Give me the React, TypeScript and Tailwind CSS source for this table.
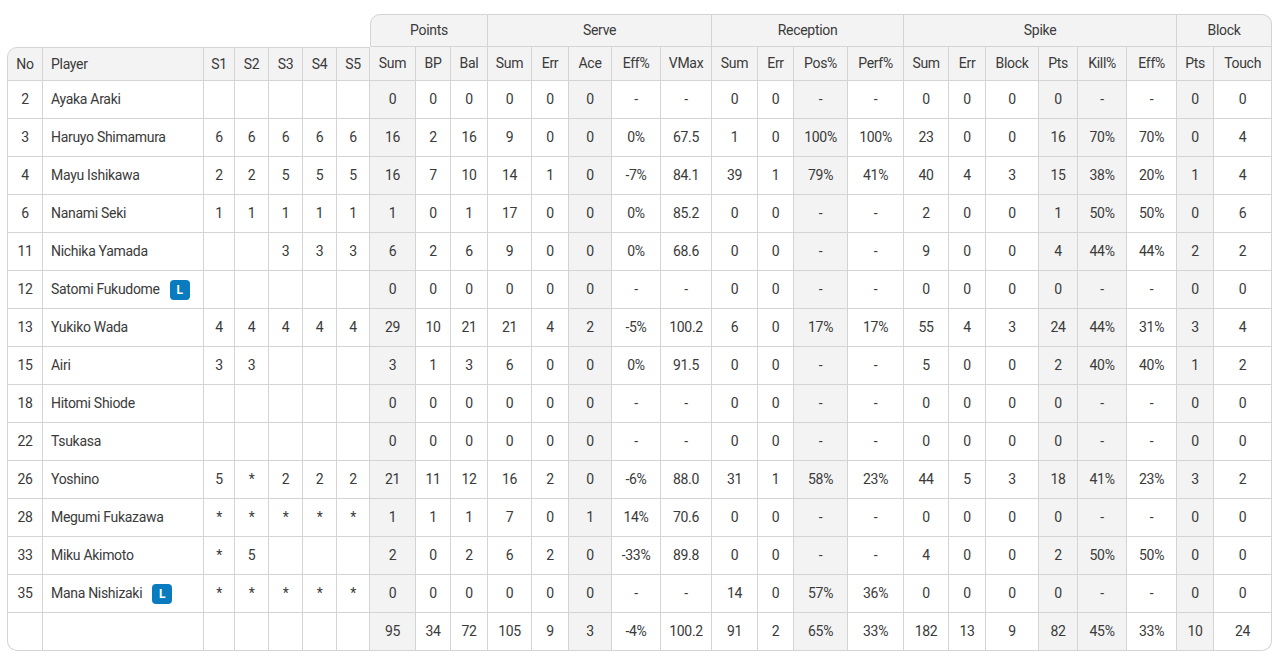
import React from 'react';

type Row = {
  no: string;
  name: string;
  libero?: boolean;
  sets: string[];
  stats: string[];
};

const groups = [
  { label: 'Points', span: 3 },
  { label: 'Serve', span: 5 },
  { label: 'Reception', span: 4 },
  { label: 'Spike', span: 6 },
  { label: 'Block', span: 2 },
];

const statHeaders = [
  'Sum', 'BP', 'Bal',
  'Sum', 'Err', 'Ace', 'Eff%', 'VMax',
  'Sum', 'Err', 'Pos%', 'Perf%',
  'Sum', 'Err', 'Block', 'Pts', 'Kill%', 'Eff%',
  'Pts', 'Touch',
];

// column widths in px, left to right
const widths = [
  36, 161, 31, 34, 34, 34, 33,
  46, 35, 37,
  44, 37, 43, 49, 51,
  46, 36, 54, 56,
  45, 37, 53, 39, 49, 50,
  37, 58,
];

// stat columns (0-based inside stats) with a grey fill
const shaded = new Set([0, 5, 10, 15, 16, 18]);

const empty = ['0', '0', '0', '0', '0', '0', '-', '-', '0', '0', '-', '-', '0', '0', '0', '0', '-', '-', '0', '0'];

const rows: Row[] = [
  { no: '2', name: 'Ayaka Araki', sets: ['', '', '', '', ''], stats: empty },
  { no: '3', name: 'Haruyo Shimamura', sets: ['6', '6', '6', '6', '6'], stats: ['16', '2', '16', '9', '0', '0', '0%', '67.5', '1', '0', '100%', '100%', '23', '0', '0', '16', '70%', '70%', '0', '4'] },
  { no: '4', name: 'Mayu Ishikawa', sets: ['2', '2', '5', '5', '5'], stats: ['16', '7', '10', '14', '1', '0', '-7%', '84.1', '39', '1', '79%', '41%', '40', '4', '3', '15', '38%', '20%', '1', '4'] },
  { no: '6', name: 'Nanami Seki', sets: ['1', '1', '1', '1', '1'], stats: ['1', '0', '1', '17', '0', '0', '0%', '85.2', '0', '0', '-', '-', '2', '0', '0', '1', '50%', '50%', '0', '6'] },
  { no: '11', name: 'Nichika Yamada', sets: ['', '', '3', '3', '3'], stats: ['6', '2', '6', '9', '0', '0', '0%', '68.6', '0', '0', '-', '-', '9', '0', '0', '4', '44%', '44%', '2', '2'] },
  { no: '12', name: 'Satomi Fukudome', libero: true, sets: ['', '', '', '', ''], stats: empty },
  { no: '13', name: 'Yukiko Wada', sets: ['4', '4', '4', '4', '4'], stats: ['29', '10', '21', '21', '4', '2', '-5%', '100.2', '6', '0', '17%', '17%', '55', '4', '3', '24', '44%', '31%', '3', '4'] },
  { no: '15', name: 'Airi', sets: ['3', '3', '', '', ''], stats: ['3', '1', '3', '6', '0', '0', '0%', '91.5', '0', '0', '-', '-', '5', '0', '0', '2', '40%', '40%', '1', '2'] },
  { no: '18', name: 'Hitomi Shiode', sets: ['', '', '', '', ''], stats: empty },
  { no: '22', name: 'Tsukasa', sets: ['', '', '', '', ''], stats: empty },
  { no: '26', name: 'Yoshino', sets: ['5', '*', '2', '2', '2'], stats: ['21', '11', '12', '16', '2', '0', '-6%', '88.0', '31', '1', '58%', '23%', '44', '5', '3', '18', '41%', '23%', '3', '2'] },
  { no: '28', name: 'Megumi Fukazawa', sets: ['*', '*', '*', '*', '*'], stats: ['1', '1', '1', '7', '0', '1', '14%', '70.6', '0', '0', '-', '-', '0', '0', '0', '0', '-', '-', '0', '0'] },
  { no: '33', name: 'Miku Akimoto', sets: ['*', '5', '', '', ''], stats: ['2', '0', '2', '6', '2', '0', '-33%', '89.8', '0', '0', '-', '-', '4', '0', '0', '2', '50%', '50%', '0', '0'] },
  { no: '35', name: 'Mana Nishizaki', libero: true, sets: ['*', '*', '*', '*', '*'], stats: ['0', '0', '0', '0', '0', '0', '-', '-', '14', '0', '57%', '36%', '0', '0', '0', '0', '-', '-', '0', '0'] },
];

const totals = ['95', '34', '72', '105', '9', '3', '-4%', '100.2', '91', '2', '65%', '33%', '182', '13', '9', '82', '45%', '33%', '10', '24'];

const cell = 'border-r border-b border-[#d4d4d4] text-center align-middle p-0';

function LiberoBadge() {
  return (
    <span className="ml-[10px] inline-flex h-5 w-5 items-center justify-center rounded-[4px] bg-[#0b7bc0] text-[12px] font-bold leading-none tracking-normal text-white">
      L
    </span>
  );
}

export default function App() {
  return (
    <div className="min-h-screen bg-white pl-[7px] pt-[14px] text-[14px] tracking-[-0.3px] text-[#3a3a3a] [font-family:Roboto,'Noto_Sans',sans-serif]">
      <table className="table-fixed border-separate border-spacing-0" style={{ width: 1265 }}>
        <colgroup>
          {widths.map((w, i) => (
            <col key={i} style={{ width: w }} />
          ))}
        </colgroup>
        <thead>
          <tr className="h-[33px]">
            <th colSpan={7} className="p-0" />
            {groups.map((g, i) => (
              <th
                key={g.label}
                colSpan={g.span}
                className={
                  'border-t border-r border-b border-[#d4d4d4] bg-[#f3f3f3] p-0 text-center font-normal ' +
                  (i === 0 ? 'border-l rounded-tl-[10px] ' : '') +
                  (i === groups.length - 1 ? 'rounded-tr-[10px]' : '')
                }
              >
                {g.label}
              </th>
            ))}
          </tr>
          <tr className="h-[34px]">
            <th className={cell + ' border-l border-t rounded-tl-[10px] bg-[#f3f3f3] font-normal'}>No</th>
            <th className={cell + ' border-t bg-[#f3f3f3] pl-2 text-left font-normal'}>Player</th>
            {['S1', 'S2', 'S3', 'S4', 'S5'].map((s) => (
              <th key={s} className={cell + ' border-t bg-[#f3f3f3] font-normal'}>
                {s}
              </th>
            ))}
            {statHeaders.map((h, i) => (
              <th key={i} className={cell + ' bg-[#f3f3f3] font-normal'}>
                {h}
              </th>
            ))}
          </tr>
        </thead>
        <tbody>
          {rows.map((r) => (
            <tr key={r.no} className="h-[38px]">
              <td className={cell + ' border-l'}>{r.no}</td>
              <td className={cell + ' pl-2 text-left'}>
                <span className="inline-flex items-center">
                  {r.name}
                  {r.libero && <LiberoBadge />}
                </span>
              </td>
              {r.sets.map((s, i) => (
                <td key={i} className={cell}>
                  {s}
                </td>
              ))}
              {r.stats.map((s, i) => (
                <td key={i} className={cell + (shaded.has(i) ? ' bg-[#f3f3f3]' : '')}>
                  {s}
                </td>
              ))}
            </tr>
          ))}
          <tr className="h-[38px]">
            <td className={cell + ' border-l rounded-bl-[10px]'} />
            <td className={cell} />
            {[0, 1, 2, 3, 4].map((i) => (
              <td key={i} className={cell} />
            ))}
            {totals.map((s, i) => (
              <td
                key={i}
                className={
                  cell +
                  (shaded.has(i) ? ' bg-[#f3f3f3]' : '') +
                  (i === totals.length - 1 ? ' rounded-br-[10px]' : '')
                }
              >
                {s}
              </td>
            ))}
          </tr>
        </tbody>
      </table>
    </div>
  );
}
